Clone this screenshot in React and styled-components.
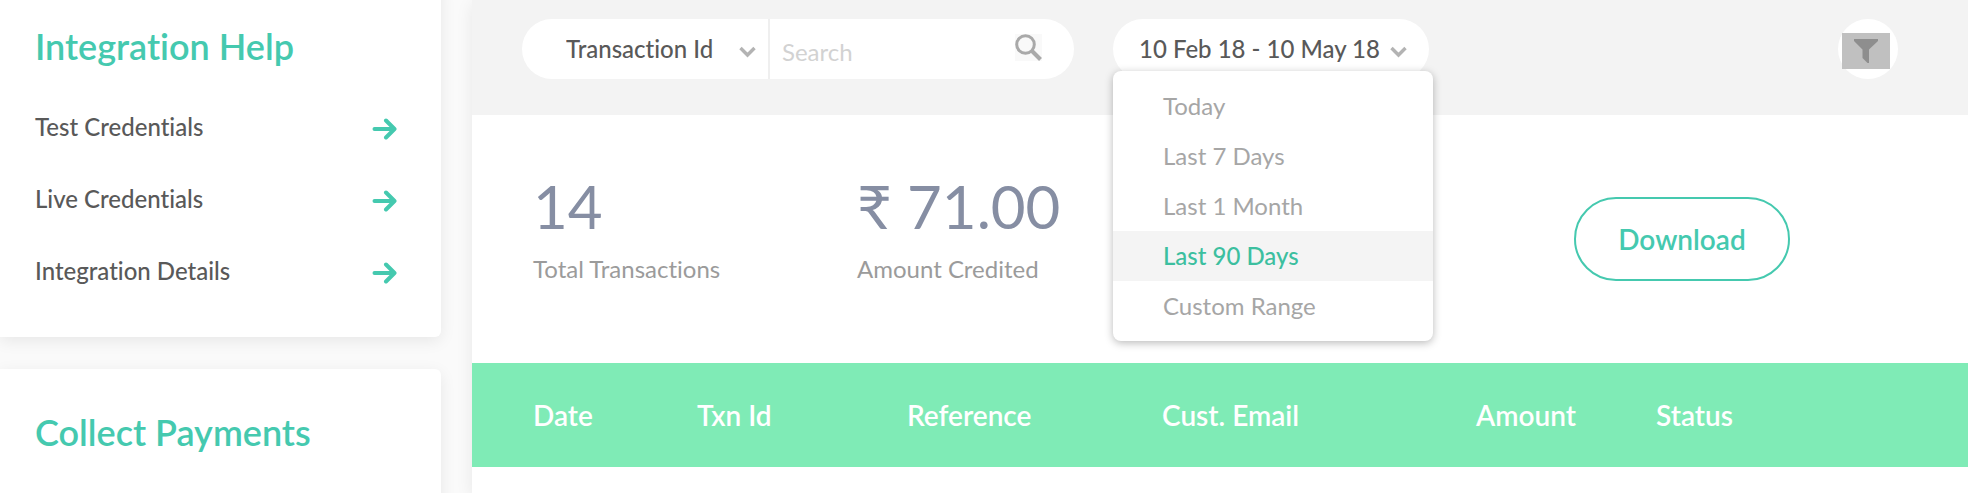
import { useState } from "react";
import styled, { createGlobalStyle } from "styled-components";

const GlobalStyle = createGlobalStyle`
  * {
    box-sizing: border-box;
  }
  body {
    margin: 0;
    background: #fafafa;
    color: #595959;
    font-family: Lato, "Open Sans", sans-serif;
    font-size: 24px;
    font-variant-ligatures: none;
    line-height: 30px;
  }
  button, input, select {
    font: inherit;
    font-variant-ligatures: none;
    color: inherit;
    border: 0;
    background: transparent;
    outline: none;
  }
`;

const Page = styled.div`
  display: flex;
  gap: 31px;
  height: 100vh;
  overflow: hidden;
`;

const Sidebar = styled.aside`
  display: flex;
  flex-direction: column;
  flex: 0 0 441px;
  gap: 32px;
  /* the first card is scrolled a little past the top */
  margin-top: -17px;
`;

const Card = styled.section`
  padding: 41px 43px 31px 35px;
  background: #fff;
  border-radius: 0 6px 6px 0;
  box-shadow: 0 4px 16px rgba(0, 0, 0, 0.08);
  flex: ${(props) => (props.$grow ? "1" : "none")};
`;

const CardTitle = styled.h2`
  margin: 0 0 22px;
  font-size: 36px;
  font-weight: 600;
  line-height: 44px;
  color: #45c9af;
`;

const LinkList = styled.ul`
  margin: 0;
  padding: 0;
  list-style: none;
`;

const HelpLink = styled.a`
  display: flex;
  align-items: center;
  justify-content: space-between;
  height: 72px;
  padding-top: 2px;
  color: #595959;
  font-weight: 500;
  text-decoration: none;
  svg {
    margin-top: 4px;
  }
`;

const Main = styled.main`
  flex: 1;
  min-width: 0;
  background: #fff;
  box-shadow: 0 4px 16px rgba(0, 0, 0, 0.08);
`;

const Toolbar = styled.div`
  display: flex;
  align-items: flex-start;
  gap: 39px;
  height: 115px;
  padding: 19px 70px 0 50px;
  background: #f3f3f3;
`;

const SearchBar = styled.form`
  display: flex;
  width: 552px;
  height: 60px;
  background: #fff;
  border-radius: 30px;
`;

const SelectWrap = styled.label`
  display: flex;
  align-items: center;
  width: 248px;
  padding-right: 12px;
  border-right: 2px solid #efefef;
  select {
    flex: 1;
    min-width: 0;
    height: 60px;
    padding: 0 0 0 44px;
    appearance: none;
    font-weight: 500;
  }
  svg {
    margin-top: 6px;
  }
`;

const SearchInput = styled.input`
  flex: 1;
  min-width: 0;
  padding: 6px 0 0 12px;
  &::placeholder {
    color: #d2d2d2;
    opacity: 1;
  }
`;

const SearchButton = styled.button`
  display: flex;
  align-items: center;
  padding: 0 32px 4px 12px;
  cursor: pointer;
`;

const DateFilter = styled.div`
  position: relative;
`;

const DateButton = styled.button`
  display: flex;
  align-items: center;
  gap: 10px;
  height: 60px;
  padding: 0 22px 0 26px;
  background: #fff;
  border-radius: 30px;
  font-weight: 500;
  white-space: nowrap;
  cursor: pointer;
  svg {
    margin-top: 6px;
  }
`;

const Menu = styled.ul`
  position: absolute;
  top: 52px;
  left: 0;
  width: 320px;
  margin: 0;
  padding: 10px 0;
  list-style: none;
  background: #fff;
  border-radius: 8px;
  box-shadow: 0 2px 8px rgba(0, 0, 0, 0.28);
`;

const MenuItem = styled.button`
  display: block;
  width: 100%;
  height: 50px;
  padding: 0 50px;
  text-align: left;
  color: ${(props) => (props.$active ? "#3cbf9f" : "#a6a6a6")};
  background: ${(props) => (props.$active ? "#f4f4f4" : "#fff")};
  font-weight: ${(props) => (props.$active ? 500 : 400)};
  cursor: pointer;
`;

const FilterCircle = styled.div`
  display: flex;
  align-items: center;
  width: 60px;
  height: 60px;
  margin-left: auto;
  padding: 4px;
  background: #fff;
  border-radius: 50%;
`;

const FilterButton = styled.button`
  display: flex;
  align-items: center;
  justify-content: center;
  width: 48px;
  height: 36px;
  margin-top: 4px;
  padding: 0;
  background: #c0c0c0;
  cursor: pointer;
`;

const Summary = styled.section`
  display: flex;
  align-items: center;
  height: 248px;
  padding: 0 178px 0 61px;
`;

const Stat = styled.div`
  width: 324px;
  margin-bottom: 24px;
`;

const StatValue = styled.div`
  font-size: 60px;
  line-height: 72px;
  color: #868ea3;
`;

const StatLabel = styled.div`
  margin-top: 12px;
  color: #9b9b9b;
`;

const DownloadButton = styled.button`
  width: 216px;
  height: 84px;
  margin-left: auto;
  border: 2px solid #45c9af;
  border-radius: 42px;
  font-size: 28px;
  font-weight: 600;
  color: #45c9af;
  cursor: pointer;
`;

const Table = styled.table`
  width: 100%;
  table-layout: fixed;
  border-collapse: collapse;
  background: #7febb6;
`;

const HeadCell = styled.th`
  width: ${(props) => (props.$width ? props.$width + "px" : "auto")};
  height: 104px;
  padding: 0;
  text-align: left;
  font-size: 28px;
  font-weight: 600;
  color: #fff;
  &:first-child {
    padding-left: 61px;
  }
`;

const links = ["Test Credentials", "Live Credentials", "Integration Details"];

const ranges = [
  "Today",
  "Last 7 Days",
  "Last 1 Month",
  "Last 90 Days",
  "Custom Range",
];

const columns = [
  { name: "Date", width: 225 },
  { name: "Txn Id", width: 210 },
  { name: "Reference", width: 255 },
  { name: "Cust. Email", width: 314 },
  { name: "Amount", width: 180 },
  { name: "Status" },
];

const ArrowIcon = () => (
  <svg width="26" height="22" viewBox="0 0 26 22" fill="none">
    <path
      d="M2.5 11H22M14 2.5L22.5 11L14 19.5"
      stroke="#45c9af"
      strokeWidth="4"
      strokeLinecap="round"
      strokeLinejoin="round"
    />
  </svg>
);

const ChevronIcon = () => (
  <svg width="17" height="12" viewBox="0 0 17 12" fill="none">
    <path
      d="M1.5 2L8.5 9L15.5 2"
      stroke="#b3b3b3"
      strokeWidth="3.4"
    />
  </svg>
);

const SearchIcon = () => (
  <svg width="27" height="27" viewBox="0 0 27 27" fill="none">
    <rect width="27" height="27" fill="#f9f9f9" />
    <circle cx="10.5" cy="10.5" r="8.8" stroke="#a9a9a9" strokeWidth="3" />
    <path d="M17 17L25.5 25.5" stroke="#a9a9a9" strokeWidth="4" />
  </svg>
);

const FunnelIcon = () => (
  <svg width="26" height="26" viewBox="0 0 26 26">
    <path d="M1 1H25V3L16 11.5V25L14.5 25L9.5 20V11.5L1 3Z" fill="#8e8e8e" />
  </svg>
);

export default function App() {
  const [range, setRange] = useState("Last 90 Days");

  return (
    <>
      <GlobalStyle />
      <Page>
        <Sidebar>
          <Card>
            <CardTitle>Integration Help</CardTitle>
            <LinkList>
              {links.map((link) => (
                <li key={link}>
                  <HelpLink href="#">
                    {link}
                    <ArrowIcon />
                  </HelpLink>
                </li>
              ))}
            </LinkList>
          </Card>
          <Card $grow>
            <CardTitle>Collect Payments</CardTitle>
          </Card>
        </Sidebar>

        <Main>
          <Toolbar>
            <SearchBar onSubmit={(e) => e.preventDefault()}>
              <SelectWrap>
                <select aria-label="Search by">
                  <option>Transaction Id</option>
                </select>
                <ChevronIcon />
              </SelectWrap>
              <SearchInput
                type="text"
                placeholder="Search"
                aria-label="Search"
              />
              <SearchButton type="submit" aria-label="Submit search">
                <SearchIcon />
              </SearchButton>
            </SearchBar>

            <DateFilter>
              <DateButton type="button" aria-expanded="true">
                10 Feb 18 - 10 May 18
                <ChevronIcon />
              </DateButton>
              <Menu>
                {ranges.map((item) => (
                  <li key={item}>
                    <MenuItem
                      type="button"
                      $active={item === range}
                      onClick={() => setRange(item)}
                    >
                      {item}
                    </MenuItem>
                  </li>
                ))}
              </Menu>
            </DateFilter>

            <FilterCircle>
              <FilterButton type="button" aria-label="Filter">
                <FunnelIcon />
              </FilterButton>
            </FilterCircle>
          </Toolbar>

          <Summary>
            <Stat>
              <StatValue>14</StatValue>
              <StatLabel>Total Transactions</StatLabel>
            </Stat>
            <Stat>
              <StatValue>₹ 71.00</StatValue>
              <StatLabel>Amount Credited</StatLabel>
            </Stat>
            <DownloadButton type="button">Download</DownloadButton>
          </Summary>

          <Table>
            <thead>
              <tr>
                {columns.map((col) => (
                  <HeadCell key={col.name} scope="col" $width={col.width}>
                    {col.name}
                  </HeadCell>
                ))}
              </tr>
            </thead>
          </Table>
        </Main>
      </Page>
    </>
  );
}
